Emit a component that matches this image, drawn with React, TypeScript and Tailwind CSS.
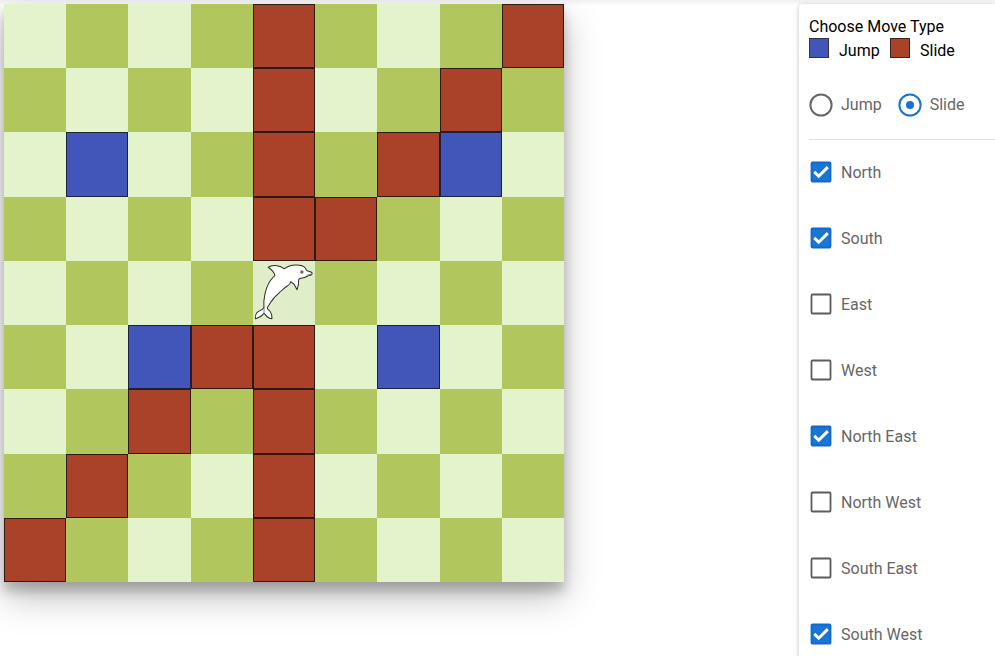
type Move = 'jump' | 'slide' | 'piece' | null;

const layout = [
  '....S...S',
  '....S..S.',
  '.J..S.SJ.',
  '....SS...',
  '....P....',
  '..JSS.J..',
  '..S.S....',
  '.S..S....',
  'S...S....',
];

const moveOf = (ch: string): Move =>
  ch === 'S' ? 'slide' : ch === 'J' ? 'jump' : ch === 'P' ? 'piece' : null;

const directions: [string, boolean][] = [
  ['North', true],
  ['South', true],
  ['East', false],
  ['West', false],
  ['North East', true],
  ['North West', false],
  ['South East', false],
  ['South West', true],
];

function Dolphin() {
  return (
    <svg viewBox="0 0 62 64" className="block h-full w-full">
      <path
        d="M15.2 6.2C17.5 4.6 20 4.3 22.5 4.5C26 4.8 28.8 5.8 31 7.8C34.5 5.2 38.5 4.1 42.5 4C46.5 3.9 50.4 4.8 52 7C52.9 8.3 53 9.3 54 9.8C56 10.4 58.2 10.6 58.8 11.8C59 13 58.6 14.2 57 14.3C54.5 14.6 53.5 15.8 51.5 16.4C49 17.2 47 17 45.6 18.2C45 20.5 45.6 23 44.9 25L43.9 28.6C42.6 26.6 42 24.6 40.6 22.8C39.6 21.6 38.6 22.2 37.6 20.5C37.4 23 36 23.8 34.5 24.6C31 26.6 29 29 26 31.8C23 34.3 20.5 37 18.3 40.2L14.2 46.6C14.2 48.2 16.2 49.2 17.4 50.8C18.7 52.8 19 55.4 18.9 57.6C17 57.4 15.8 57 14.4 55.8C12.9 54.6 12.4 53.2 11 52.2C9.6 53.4 8.8 54.6 7 55.5C5.4 56.2 4.4 57.2 2.5 57.6C2.2 55.2 2.3 53.4 3.6 51.8C5.4 49.5 9.4 49 10.9 46.3C10.6 42 10.8 37.6 11.8 33.5C12.8 28.5 14.4 23.6 17.4 19.4C18.8 17.4 20.2 15.8 21.8 14.6C21.4 11.2 18.6 8.6 15.2 6.2Z"
        fill="white"
        stroke="#282d22"
        strokeWidth="1"
        strokeLinejoin="round"
      />
      <circle cx="48.7" cy="11" r="1.7" fill="#657052" />
      <path d="M53.5 14.3L58 13.2M11 46.5V52" fill="none" stroke="#48503e" strokeWidth=".7" />
    </svg>
  );
}

function Board() {
  return (
    <div className="grid h-[578px] w-[560px] shrink-0 grid-cols-9 grid-rows-9 shadow-[0_15px_34px_rgba(0,0,0,0.25),0_9px_11px_rgba(0,0,0,0.22)]">
      {layout.flatMap((row, r) =>
        row.split('').map((ch, c) => {
          const move = moveOf(ch);
          const color =
            move === 'slide'
              ? 'border border-[#2c1b13] bg-[#aa4129]'
              : move === 'jump'
                ? 'border border-[#1c2338] bg-[#4256b9]'
                : move === 'piece'
                  ? 'bg-[#dfeec8]'
                  : (r + c) % 2 === 0
                    ? 'bg-[#e3f3cb]'
                    : 'bg-[#b1c75d]';
          return (
            <div key={`${r}-${c}`} className={`min-h-0 min-w-0 ${color}`}>
              {move === 'piece' && <Dolphin />}
            </div>
          );
        }),
      )}
    </div>
  );
}

function Radio({ label, checked }: { label: string; checked: boolean }) {
  return (
    <label className="flex items-center gap-2">
      <svg viewBox="0 0 24 24" className="h-6 w-6">
        <circle cx="12" cy="12" r="10.6" fill="none" stroke={checked ? '#1673d4' : '#666'} strokeWidth="2" />
        {checked && <circle cx="12" cy="12" r="4" fill="#1673d4" />}
      </svg>
      <span>{label}</span>
    </label>
  );
}

function Check({ label, checked }: { label: string; checked: boolean }) {
  return (
    <label className="flex h-[66px] items-center gap-2">
      <svg viewBox="0 0 24 24" className="h-6 w-6">
        <rect
          x="2.5"
          y="2.5"
          width="19"
          height="19"
          rx="1"
          fill={checked ? '#1976d2' : 'white'}
          stroke={checked ? '#1369d0' : '#5c5c5c'}
          strokeWidth="1.8"
        />
        {checked && <path d="M5.3 11.9L9.7 16.2L18.8 7.1" fill="none" stroke="white" strokeWidth="2.9" />}
      </svg>
      <span className="pt-px">{label}</span>
    </label>
  );
}

export default function App() {
  return (
    <div className="h-[656px] w-[995px] overflow-hidden bg-white font-['Roboto',sans-serif] text-base text-[#666]">
      <div className="flex h-full justify-between bg-[linear-gradient(to_bottom,#f1f1f1_0px,#f8f8f8_3px,#fefefe_5px,#fff_6px)] pl-1 pt-1">
        <Board />
        <aside className="h-[700px] w-[196px] shrink-0 rounded-tl bg-white pl-[10px] pt-[10px] shadow-[0_1px_5px_rgba(0,0,0,0.25)]">
          <div className="text-black">
            <div className="h-6 leading-[26px]">Choose Move Type</div>
            <div className="flex h-6">
              <span className="h-5 w-5 border border-[#303443] bg-[#4256b9]" />
              <span className="ml-[10px] w-[51px] leading-[26px]">Jump</span>
              <span className="h-5 w-5 border border-[#38291c] bg-[#aa4129]" />
              <span className="ml-[10px] leading-[26px]">Slide</span>
            </div>
          </div>
          <div className="mt-[31px] flex h-6 items-center gap-4">
            <Radio label="Jump" checked={false} />
            <Radio label="Slide" checked />
          </div>
          <div className="mt-[22px] h-px bg-[#e0e0e0]" />
          <div className="-mt-px">
            {directions.map(([label, checked]) => (
              <Check key={label} label={label} checked={checked} />
            ))}
          </div>
        </aside>
      </div>
    </div>
  );
}
